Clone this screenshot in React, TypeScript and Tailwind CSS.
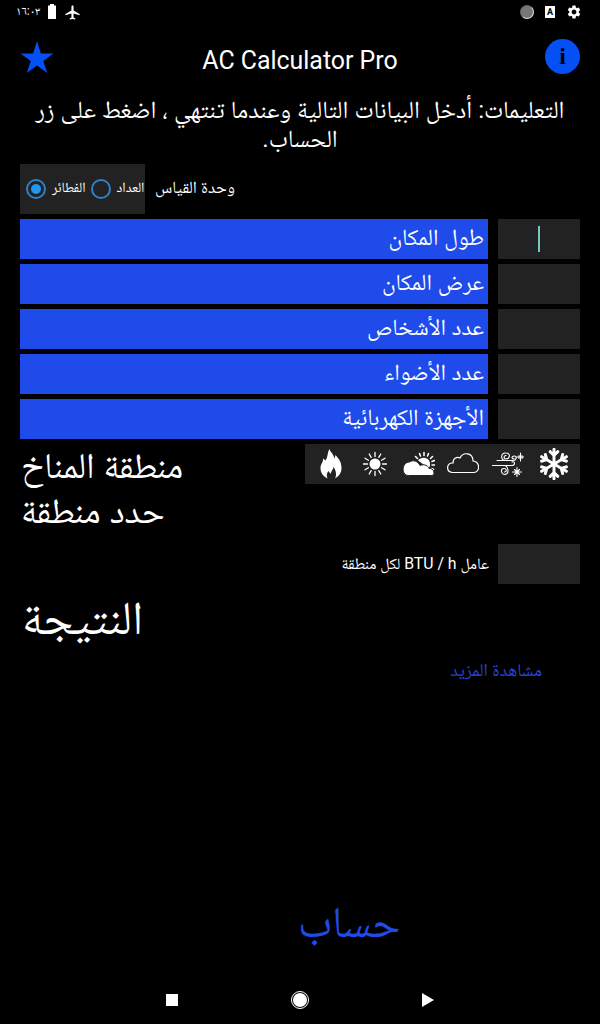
import type { ReactNode } from "react";
import { MdAirplanemodeActive, MdSettings } from "react-icons/md";
import { FaRegSnowflake } from "react-icons/fa";

const fields = ["طول المكان", "عرض المكان", "عدد الأشخاص", "عدد الأضواء", "الأجهزة الكهربائية"];

function Radio({ checked }: { checked?: boolean }) {
  return (
    <span className="flex size-5 shrink-0 items-center justify-center rounded-full border-2 border-[#2f7fc9]">
      {checked && <span className="size-2.5 rounded-full bg-[#2196f3]" />}
    </span>
  );
}

function StatusBar() {
  return (
    <header className="flex h-6 shrink-0 items-center justify-between pl-4 pr-[18px]">
      <div className="flex items-center">
        <span className="w-[25px] pb-[2px] text-[12px] leading-[22px]">١٦:٠٣</span>
        <svg viewBox="0 0 8 15" className="mb-[2px] ml-[7px] h-[15px] w-2">
          <path d="M2 0h4v1.500h2V15H0V1.500h2z" fill="white" />
        </svg>
        <MdAirplanemodeActive className="ml-2 size-[17px]" />
      </div>
      <div className="flex items-center">
        <span className="size-[14px] rounded-full border border-[#666] border-b-[#ddd] border-r-[#ddd] bg-[#777]" />
        <span className="ml-[11px] flex h-3 w-[10px] items-center justify-center bg-white text-[9px] font-bold leading-3 text-black">A</span>
        <MdSettings className="ml-[11px] size-4" />
      </div>
    </header>
  );
}

function Drawing({ children, className }: { children: ReactNode; className: string }) {
  return (
    <svg viewBox="0 0 32 32" className={className} fill="none" stroke="white" strokeWidth="1.3" strokeLinecap="round">
      {children}
    </svg>
  );
}

function Climate() {
  return (
    <div className="flex h-10 w-[275px] items-center bg-[#222] pl-[10px]">
      <Drawing className="size-8 shrink-0">
        <path fill="white" stroke="none" d="M14.500 1C15 4 18 5 19.500 10.500L20.500 7C24 11 26.500 14 26.500 20C26.500 25 24 28 20 30.500C22 27 21 23 18.500 18.500C18.500 22 16.500 22 15.500 26L13.500 23C11.500 25 11.500 28 12.500 30.500C8 28 5.500 25 5.500 20C5.500 16 8.500 14 8 10.500L10.500 12.500C13 9 12.500 4 14.500 1Z" />
      </Drawing>
      <Drawing className="ml-3 size-8 shrink-0">
        <circle cx="16" cy="16" r="5.500" fill="white" stroke="none" />
        <path d="M16 4.500v4M16 23.500v4M4.500 16h4M23.500 16h4M10.200 6l2 3.400M19.800 22.600l2 3.400M6 10.200l3.400 2M22.600 19.800l3.400 2M6 21.800l3.400-2M22.600 12.200l3.400-2M10.200 26l2-3.400M19.800 9.400l2-3.400" />
      </Drawing>
      <Drawing className="ml-3 size-8 shrink-0">
        <path d="M12.500 8.500l2 2M16.500 5.500l1 2.500M21 4.500v3M25.500 5.500l-1 2.500M29.500 8.500l-2 2M31.500 12.500l-2.500 1M31.500 17h-2.500M30.500 21.500l-2-1" strokeWidth="1.600" />
        <path d="M15 12.500C18 8 27 9 27 16C27 18 26.500 19 25.500 20" fill="white" stroke="none" />
        <path fill="white" stroke="#222" strokeWidth="1" d="M5 27.500C-2 27.500-1.500 14 6.500 14C10 11.500 15 13 17 17.500C22 15.500 25 18 26 20.500C32 20 32 27.500 29 27.500Z" />
      </Drawing>
      <Drawing className="ml-3 size-8 shrink-0">
        <path d="M5 24.500C-1 23.500-1 14.500 6 15C6 10 10 8.500 13 10C16 3.500 26 4.500 26 13C33.500 14 33 24 27 24.500Z" strokeWidth="1.200" />
      </Drawing>
      <Drawing className="ml-[13px] size-8 shrink-0">
        <path strokeWidth="1.100" d="M5 12.500h16c4 0 4-5 1-4.500c-3 0-2 4 0 2.500M0 17.500h19c5 0 4-5 1-3.500M13 12.500c-5-1-4-8 1-7.500c5 0 4 6 0 6c-3 0-2-4 0-3.500M12 17.500c4 0 6 8 1 9c-4 0-5-6-1-6c3 0 3 3.500.5 3.500M28.500 5v8M25 9h7M27 7.500v3M30 7.500v3M25 19.500v9M20.500 24h9M22.500 21.500l5 5M27.500 21.500l-5 5" />
      </Drawing>
      <FaRegSnowflake className="ml-[14px] size-8 shrink-0" />
    </div>
  );
}

export default function App() {
  return (
    <div className="flex h-[1024px] w-[600px] flex-col overflow-hidden bg-black font-[Roboto,'Noto_Naskh_Arabic','Noto_Sans',sans-serif] text-white">
      <StatusBar />
      <div className="flex h-[72px] shrink-0 items-center justify-between px-5">
        <svg viewBox="0 0 34 34" className="mb-[7px] size-[34px]">
          <path fill="#0550f5" d="M17 1l3.800 12.500H33.500L23.300 21l4 12L17 25.600 6.700 33l4-12L.5 13.500h12.700z" />
        </svg>
        <h1 className="pl-px pt-[2px] text-[24.9px] leading-8">AC Calculator Pro</h1>
        <span className="mb-2 flex size-[35px] items-center justify-center rounded-full bg-[#0550f5] pb-px font-['Liberation_Serif',serif] text-[24px] font-bold leading-none text-black">i</span>
      </div>
      <p dir="rtl" className="h-[68px] shrink-0 px-4 text-center text-[24.6px] leading-[28.500px]">
        التعليمات: أدخل البيانات التالية وعندما تنتهي ، اضغط على زر
        <br />
        الحساب.
      </p>
      <div className="flex h-[50px] shrink-0 items-center px-5">
        <div className="flex h-full w-[125px] items-center overflow-hidden whitespace-nowrap bg-[#222] pl-[6px] text-[14px]">
          <Radio checked />
          <span className="ml-[6px] mr-[5px] pb-[3px]">الفطائر</span>
          <Radio />
          <span className="ml-[6px] pb-[3px]">العداد</span>
        </div>
        <span className="ml-[10px] pb-[3px] text-[17px]">وحدة القياس</span>
      </div>
      <div className="mt-[5px] flex shrink-0 flex-col gap-[5px] px-5">
        {fields.map((label, i) => (
          <div key={label} className="flex h-10 gap-[10px]">
            <div dir="rtl" className="flex-1 bg-[#1e4be9] px-1 text-[23.1px] leading-[38px]">{label}</div>
            <div className="flex w-[82px] items-center justify-center bg-[#222]">
              {i === 0 && <span className="h-[26px] w-[2px] bg-[#72c9bc]" />}
            </div>
          </div>
        ))}
      </div>
      <div className="mt-[5px] flex h-[100px] shrink-0 justify-between px-5">
        <div className="pl-px text-[36px] leading-[45px]">
          <p>منطقة المناخ</p>
          <p>حدد منطقة</p>
        </div>
        <Climate />
      </div>
      <div className="flex h-10 shrink-0 items-center justify-end gap-[9px] px-5">
        <span dir="rtl" className="text-[15.800px]">عامل BTU / h لكل منطقة</span>
        <span className="h-10 w-[82px] bg-[#222]" />
      </div>
      <p className="h-[68px] shrink-0 pl-[22px] text-[47px] leading-[67px]">النتيجة</p>
      <p className="-mt-[2px] h-10 shrink-0 pr-[58px] text-right text-[18px] leading-10 text-[#2a45d8]">مشاهدة المزيد</p>
      <div className="mt-auto h-[76px] shrink-0 pl-[298px] text-[44px] leading-[76px] text-[#1e4be9]">حساب</div>
      <nav className="mt-4 flex h-12 shrink-0 items-center justify-between pl-[166px] pr-[166px]">
        <span className="size-3 bg-white" />
        <span className="flex size-[18px] items-center justify-center rounded-full border border-white">
          <span className="size-[14px] rounded-full bg-white" />
        </span>
        <svg viewBox="0 0 12 14" className="h-[14px] w-3">
          <path d="M0 0l12 7-12 7z" fill="white" />
        </svg>
      </nav>
    </div>
  );
}
